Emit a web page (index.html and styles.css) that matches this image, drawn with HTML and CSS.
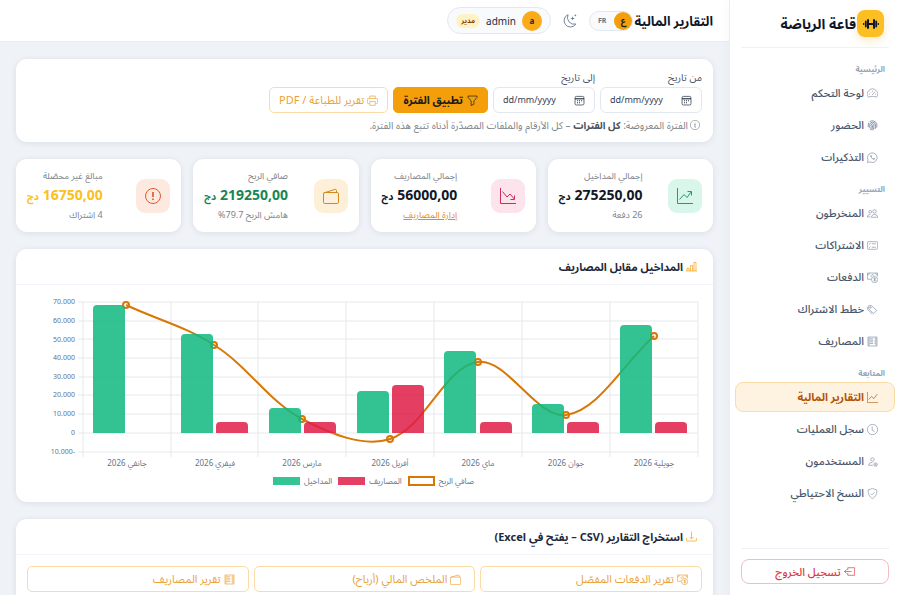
FILE: index.html
```html
<!DOCTYPE html>
<html lang="ar" dir="rtl">

<head>
    <meta charset="UTF-8">
    <meta name="viewport" content="width=device-width, initial-scale=1.0">
    <title>التقارير المالية</title>
    <link rel="stylesheet" href="styles.css">
</head>

<body>
    <!-- icon sprite -->
    <svg class="sprite" aria-hidden="true">
        <symbol id="i-dumbbell" viewBox="0 0 16 16"><path d="M5 8h6" stroke-width="2"/><path d="M2.800 5.500v5M13.200 5.500v5" stroke-width="1.800" stroke-linecap="round"/><path d="M5 4v8M11 4v8" stroke-width="2" stroke-linecap="round"/><path d="M.7 7v2M15.300 7v2" stroke-width="1.200"/></symbol>
        <symbol id="i-speed" viewBox="0 0 16 16"><path d="M2.200 13.500a7.400 7.400 0 1 1 11.600 0c-1-.8-2.600-1.300-5.800-1.300s-4.800.5-5.800 1.300zM8 4v1.500M3 9h1.500M11.500 9H13M4.500 5.500l1 1M7.500 10l4-4.500"/></symbol>
        <symbol id="i-finger" viewBox="0 0 16 16"><path d="M3 12c1-2 .5-3.500.7-5A4.400 4.400 0 0 1 12.400 7c.1 2 .1 3.500-.6 6M5 14.500C6.500 12 5.800 9 6 7.500a2.100 2.100 0 0 1 4.200 0c0 3-.3 5-1.500 7.500M8 7.500c.1 3-.2 5-1.200 7.300M1.700 10c.3-2-.1-4 .8-6M4 2.300A7 7 0 0 1 14 5c.5 2 .4 4 .2 6" stroke-width="1.400"/></symbol>
        <symbol id="i-whatsapp" viewBox="0 0 16 16"><path d="M.6 15.400l1-3.700A7 7 0 1 1 4.300 14.400z"/><path d="M5.600 4.200c-1 .8-1 2 0 3.500 1.300 2 2.500 3 4.200 3.500 1 .2 1.900-.5 1.900-1.600L9.900 8.700l-.9 1C8 9.300 7 8.300 6.400 7.200l.6-.9-.8-2z" class="fill"/></symbol>
        <symbol id="i-people" viewBox="0 0 16 16"><circle cx="11" cy="5" r="2.500"/><circle cx="4.700" cy="5.500" r="2"/><path d="M6.500 13.500c0-2.500 1.700-4 4.500-4s4.500 1.500 4.500 4zM.6 13H4.800M.6 13c0-2.200 1.300-3.500 4.100-3.500"/></symbol>
        <symbol id="i-card" viewBox="0 0 16 16"><rect x=".5" y="2.500" width="15" height="11" rx="1.300"/><path d="M7 5.500h6M7 10.500h6M2.700 5.500l.8.8L5 4.600M2.700 10.500l.8.8L5 9.600"/></symbol>
        <symbol id="i-cash" viewBox="0 0 16 16"><circle cx="11" cy="11" r="4.500"/><path d="M12.500 9.500c-1-.8-2.600-.6-2.600.3 0 1.200 2.600.7 2.600 2 0 1-1.700 1.200-2.700.2M11.200 8.300v5.400M6 10.500H.5v-9h15v5M.5 4.500a3 3 0 0 0 3-3M12.500 1.500a3 3 0 0 0 3 3M6.300 7.200A2 2 0 1 1 9.800 5.500"/></symbol>
        <symbol id="i-tags" viewBox="0 0 16 16"><path d="M2.500 2.500H7.100l7 7-4.600 4.600-7-7zM1 4v4l6.800 6.800"/><circle cx="5.200" cy="5.200" r="1"/></symbol>
        <symbol id="i-receipt" viewBox="0 0 16 16"><path d="M1.500 1.500h13v13h-13zM4 4h5M4 6.300h5M4 8.600h5M4 10.900h5M11 4h1.500M11 6.300h1.500M11 8.600h1.500M11 10.900h1.500M3 2v12M13 2v12"/></symbol>
        <symbol id="i-graph" viewBox="0 0 16 16"><path d="M.5 0v15.500H16M2.500 11l4-4.500 3.500 3 5-6.500"/></symbol>
        <symbol id="i-clock" viewBox="0 0 16 16"><circle cx="8" cy="8" r="7.500"/><path d="M7.500 3.500V9l3.500 2"/></symbol>
        <symbol id="i-persongear" viewBox="0 0 16 16"><circle cx="8" cy="5" r="2.500"/><path d="M8.500 13.500H2.500c0-2.700 2-4 5.500-4"/><circle cx="12.500" cy="12.500" r="2.500"/><circle cx="12.500" cy="12.500" r=".8"/></symbol>
        <symbol id="i-shield" viewBox="0 0 16 16"><path d="M8 .6c2 1 4 1.600 6.100 2C14.800 8 13 12.500 8 15.400 3 12.500 1.200 8 1.900 2.600 4 2.200 6 1.600 8 .6zM5.300 8l2 2 3.500-3.600"/></symbol>
        <symbol id="i-logout" viewBox="0 0 16 16"><path d="M5.500 6V2.500h10v11h-10V10M11 8H.8M3.800 5L.8 8l3 3"/></symbol>
        <symbol id="i-moon" viewBox="0 0 16 16"><path d="M5.800.8a7.300 7.300 0 1 0 8.900 10.700A7.700 7.700 0 0 1 5.800.8z"/><path d="M11 2.500l.6 1.900 1.900.6-1.900.6-.6 1.900-.6-1.900L8.500 5l1.900-.6zM14 0l.4 1.100 1.100.4-1.100.4L14 3l-.4-1.100-1.100-.4 1.100-.4z" class="fill"/></symbol>
        <symbol id="i-calendar" viewBox="0 0 16 16"><rect x="1.500" y="2" width="13" height="12.500" rx="2"/><path d="M1.500 5.500h13" stroke-width="1.600"/><path d="M4.500 8.500h1.400M7.300 8.500h1.400M10.100 8.500h1.400M4.500 11.300h1.400M7.300 11.300h1.400" stroke-width="1.500"/></symbol>
        <symbol id="i-funnel" viewBox="0 0 16 16"><path d="M1.500 1.500h13v2L10 8.700v4.800l-4 1.800V8.700L1.500 3.500z"/></symbol>
        <symbol id="i-printer" viewBox="0 0 16 16"><path d="M4 4.500V1.500h8v3M3.500 12.500H2a1.500 1.500 0 0 1-1.500-1.500V6.500A1.500 1.500 0 0 1 2 5h12a1.500 1.500 0 0 1 1.500 1.500V11a1.500 1.500 0 0 1-1.500 1.500h-1.500M4 9.500h8v5.500H4zM2.500 7.500h1"/></symbol>
        <symbol id="i-info" viewBox="0 0 16 16"><circle cx="8" cy="8" r="7.500"/><path d="M6.800 6.800h1.500l-.7 4.400c0 .6.600.7 1.400.4M8.400 4.200v1" stroke-width="1.300"/></symbol>
        <symbol id="i-up" viewBox="0 0 16 16"><path d="M.5 0v15.500H16M2.500 11.500L7 6.500l3 3L14 4M10.500 3.500h4v4"/></symbol>
        <symbol id="i-down" viewBox="0 0 16 16"><path d="M.5 0v15.500H16M2.500 3.500L7 9l3-3 4.300 5M10.500 11.500h4v-4"/></symbol>
        <symbol id="i-wallet" viewBox="0 0 16 16"><rect x=".5" y="4.500" width="15" height="11" rx="1.300"/><path d="M.7 5L12 1.400c.7-.2 1.500.2 1.500 1V4.500"/></symbol>
        <symbol id="i-alert" viewBox="0 0 16 16"><circle cx="8" cy="8" r="7.500"/><path d="M8 4v5" stroke-width="1.700"/><path d="M8 10.500v1.600" stroke-width="1.700"/></symbol>
        <symbol id="i-bars" viewBox="0 0 16 16"><path d="M1.500 14.500v-4h3v4M6.500 14.500v-8h3v8M11.500 14.500V2h3v12.500M0 14.500h16"/></symbol>
        <symbol id="i-download" viewBox="0 0 16 16"><path d="M.5 10v3.500a1 1 0 0 0 1 1h13a1 1 0 0 0 1-1V10M8 1v10.500M5 8.500l3 3 3-3"/></symbol>
    </svg>

    <div class="layout">
        <aside class="sidebar">
            <div class="brand">
                <span class="brand-logo"><svg class="icon"><use href="#i-dumbbell"/></svg></span>
                <span>قاعة الرياضة</span>
            </div>

            <nav class="menu">
                <h2 class="menu-title">الرئيسية</h2>
                <a href="#"><svg class="icon"><use href="#i-speed"/></svg>لوحة التحكم</a>
                <a href="#"><svg class="icon"><use href="#i-finger"/></svg>الحضور</a>
                <a href="#"><svg class="icon"><use href="#i-whatsapp"/></svg>التذكيرات</a>

                <h2 class="menu-title">التسيير</h2>
                <a href="#"><svg class="icon"><use href="#i-people"/></svg>المنخرطون</a>
                <a href="#"><svg class="icon"><use href="#i-card"/></svg>الاشتراكات</a>
                <a href="#"><svg class="icon"><use href="#i-cash"/></svg>الدفعات</a>
                <a href="#"><svg class="icon"><use href="#i-tags"/></svg>خطط الاشتراك</a>
                <a href="#"><svg class="icon"><use href="#i-receipt"/></svg>المصاريف</a>

                <h2 class="menu-title">المتابعة</h2>
                <a href="#" class="active"><svg class="icon"><use href="#i-graph"/></svg>التقارير المالية</a>
                <a href="#"><svg class="icon"><use href="#i-clock"/></svg>سجل العمليات</a>
                <a href="#"><svg class="icon"><use href="#i-persongear"/></svg>المستخدمون</a>
                <a href="#"><svg class="icon"><use href="#i-shield"/></svg>النسخ الاحتياطي</a>
            </nav>

            <div class="sidebar-footer">
                <button type="button" class="logout"><svg class="icon"><use href="#i-logout"/></svg>تسجيل الخروج</button>
            </div>
        </aside>

        <div class="page">
            <header class="topbar">
                <h1>التقارير المالية</h1>
                <div class="lang">
                    <a href="#" class="current">ع</a>
                    <a href="#">FR</a>
                </div>
                <button type="button" class="theme" aria-label="الوضع الليلي"><svg class="icon"><use href="#i-moon"/></svg></button>
                <div class="user">
                    <span class="avatar">a</span>
                    <span class="user-name">admin</span>
                    <span class="role">مدير</span>
                </div>
            </header>

            <main class="content">
                <section class="card filter">
                    <form class="filter-row">
                        <div class="field">
                            <label for="from">من تاريخ</label>
                            <div class="date">
                                <svg class="icon"><use href="#i-calendar"/></svg>
                                <input type="text" id="from" placeholder="dd/mm/yyyy" dir="ltr">
                            </div>
                        </div>
                        <div class="field">
                            <label for="to">إلى تاريخ</label>
                            <div class="date">
                                <svg class="icon"><use href="#i-calendar"/></svg>
                                <input type="text" id="to" placeholder="dd/mm/yyyy" dir="ltr">
                            </div>
                        </div>
                        <button type="button" class="btn btn-solid"><svg class="icon"><use href="#i-funnel"/></svg>تطبيق الفترة</button>
                        <a href="#" class="btn btn-outline"><svg class="icon"><use href="#i-printer"/></svg>تقرير للطباعة / PDF</a>
                    </form>
                    <p class="note"><svg class="icon"><use href="#i-info"/></svg><span>الفترة المعروضة: <strong>كل الفترات</strong> – كل الأرقام والملفات المصدّرة أدناه تتبع هذه الفترة.</span></p>
                </section>

                <section class="stats">
                    <div class="card stat">
                        <span class="stat-icon green"><svg class="icon"><use href="#i-up"/></svg></span>
                        <div class="stat-text">
                            <span>إجمالي المداخيل</span>
                            <strong>275250,00 <small>دج</small></strong>
                            <span>26 دفعة</span>
                        </div>
                    </div>
                    <div class="card stat">
                        <span class="stat-icon red"><svg class="icon"><use href="#i-down"/></svg></span>
                        <div class="stat-text">
                            <span>إجمالي المصاريف</span>
                            <strong>56000,00 <small>دج</small></strong>
                            <a href="#">إدارة المصاريف</a>
                        </div>
                    </div>
                    <div class="card stat">
                        <span class="stat-icon amber"><svg class="icon"><use href="#i-wallet"/></svg></span>
                        <div class="stat-text">
                            <span>صافي الربح</span>
                            <strong class="profit">219250,00 <small>دج</small></strong>
                            <span>هامش الربح 79.7%</span>
                        </div>
                    </div>
                    <div class="card stat">
                        <span class="stat-icon orange"><svg class="icon"><use href="#i-alert"/></svg></span>
                        <div class="stat-text">
                            <span>مبالغ غير محصّلة</span>
                            <strong class="due">16750,00 <small>دج</small></strong>
                            <span>4 اشتراك</span>
                        </div>
                    </div>
                </section>

                <section class="card">
                    <h2 class="card-title"><svg class="icon"><use href="#i-bars"/></svg>المداخيل مقابل المصاريف</h2>
                    <div class="card-body">
                        <svg class="chart" viewBox="0 0 675 174" role="img" aria-label="المداخيل مقابل المصاريف">
                            <path class="grid" d="M51 6H671M51 25H671M51 43H671M51 62H671M51 81H671M51 99H671M51 118H671M51 137H671M51 156H671M56 6V161M144 6V161M231 6V161M319 6V161M407 6V161M495 6V161M583 6V161M671 6V161"/>
                            <g class="labels-y">
                                <text x="48" y="8">70.000</text>
                                <text x="48" y="27">60.000</text>
                                <text x="48" y="46">50.000</text>
                                <text x="48" y="64">40.000</text>
                                <text x="48" y="83">30.000</text>
                                <text x="48" y="101">20.000</text>
                                <text x="48" y="120">10.000</text>
                                <text x="48" y="139">0</text>
                                <text x="48" y="158">10.000-</text>
                            </g>
                            <g class="labels-x">
                                <text x="100" y="170">جانفي 2026</text>
                                <text x="188" y="170">فيفري 2026</text>
                                <text x="275" y="170">مارس 2026</text>
                                <text x="363" y="170">أفريل 2026</text>
                                <text x="451" y="170">ماي 2026</text>
                                <text x="539" y="170">جوان 2026</text>
                                <text x="627" y="170">جويلية 2026</text>
                            </g>
                            <g class="line">
                                <path d="M99 9C131 24 160 31 187 49C221 70 241 105 275 123C302 137 336 152 363 143C398 132 418 70 451 66C480 62 510 123 539 119C572 114 596 68 627 40"/>
                                <circle cx="99" cy="9" r="3"/>
                                <circle cx="187" cy="49" r="3"/>
                                <circle cx="275" cy="123" r="3"/>
                                <circle cx="363" cy="143" r="3"/>
                                <circle cx="451" cy="66" r="3"/>
                                <circle cx="539" cy="119" r="3"/>
                                <circle cx="627" cy="40" r="3"/>
                            </g>
                            <g class="income">
                                <path d="M66 137V13q0-4 4-4h24q4 0 4 4V137z"/>
                                <path d="M154 137V42q0-4 4-4h24q4 0 4 4V137z"/>
                                <path d="M242 137V116q0-4 4-4h24q4 0 4 4V137z"/>
                                <path d="M330 137V99q0-4 4-4h24q4 0 4 4V137z"/>
                                <path d="M417 137V59q0-4 4-4h24q4 0 4 4V137z"/>
                                <path d="M505 137V112q0-4 4-4h24q4 0 4 4V137z"/>
                                <path d="M593 137V33q0-4 4-4h24q4 0 4 4V137z"/>
                            </g>
                            <g class="expense">
                                <path d="M189 137V130q0-4 4-4h24q4 0 4 4V137z"/>
                                <path d="M277 137V130q0-4 4-4h24q4 0 4 4V137z"/>
                                <path d="M365 137V93q0-4 4-4h24q4 0 4 4V137z"/>
                                <path d="M453 137V130q0-4 4-4h24q4 0 4 4V137z"/>
                                <path d="M540 137V130q0-4 4-4h24q4 0 4 4V137z"/>
                                <path d="M628 137V130q0-4 4-4h24q4 0 4 4V137z"/>
                            </g>
                        </svg>
                        <ul class="legend">
                            <li>صافي الربح<i class="key key-profit"></i></li>
                            <li>المصاريف<i class="key key-expense"></i></li>
                            <li>المداخيل<i class="key key-income"></i></li>
                        </ul>
                    </div>
                </section>

                <section class="card">
                    <h2 class="card-title"><svg class="icon"><use href="#i-download"/></svg>استخراج التقارير (CSV – يفتح في Excel)</h2>
                    <div class="card-body exports">
                        <a href="#" class="btn btn-outline"><svg class="icon"><use href="#i-cash"/></svg>تقرير الدفعات المفصّل</a>
                        <a href="#" class="btn btn-outline"><svg class="icon"><use href="#i-wallet"/></svg>الملخص المالي (أرباح)</a>
                        <a href="#" class="btn btn-outline"><svg class="icon"><use href="#i-receipt"/></svg>تقرير المصاريف</a>
                    </div>
                </section>
            </main>
        </div>
    </div>
</body>

</html>
```
FILE: styles.css
```css
* {
    box-sizing: border-box;
}

body {
    margin: 0;
    font-family: "Noto Sans", "Noto Sans Arabic", "DejaVu Sans", sans-serif;
    font-size: 11px;
    line-height: 16px;
    color: #1e293b;
    background-color: #eff3f8;
}

h1, h2, p, ul {
    margin: 0;
    padding: 0;
}

a {
    color: inherit;
    text-decoration: none;
}

button, input {
    font: inherit;
    color: inherit;
}

.sprite {
    display: none;
}

.icon {
    flex: none;
    width: 11px;
    height: 11px;
    fill: none;
    stroke: currentColor;
    stroke-width: 1;
}

.fill {
    fill: currentColor;
    stroke: none;
}

.layout {
    display: flex;
    min-height: 100vh;
}

/* sidebar */
.sidebar {
    position: sticky;
    top: 0;
    flex: none;
    display: flex;
    flex-direction: column;
    width: 171px;
    height: 100vh;
    background-color: #fff;
    border-left: 1px solid #e9eef4;
    box-shadow: 0 0 12px rgba(15, 23, 42, 0.04);
}

.brand {
    display: flex;
    align-items: center;
    gap: 1px;
    margin: 0 11px;
    padding: 10px 5px;
    border-bottom: 1px solid #eef2f7;
    font-size: 14px;
    font-weight: bold;
    color: #0f172a;
}

.brand-logo {
    display: grid;
    place-items: center;
    width: 27px;
    height: 27px;
    border-radius: 8px;
    background-color: #fbbf24;
    box-shadow: 0 3px 8px rgba(245, 158, 11, 0.25);
}

.brand-logo .icon {
    width: 16px;
    height: 16px;
}

.menu {
    display: flex;
    flex-direction: column;
    gap: 2px;
    padding: 0 5px;
}

.menu-title {
    padding: 14px 10px 0;
    font-size: 8px;
    line-height: 14px;
    font-weight: bold;
    color: #94a3b8;
}

.menu-title:not(:first-child) {
    padding-top: 7px;
    line-height: 15px;
}

.menu a {
    display: flex;
    align-items: center;
    gap: 3px;
    height: 30px;
    padding: 0 16px;
    border: 1px solid transparent;
    border-radius: 8px;
    font-weight: 500;
    color: #475569;
}

.menu .icon {
    color: #8492a8;
}

.menu .active {
    background-color: #fef3e0;
    border-color: #fbdca6;
    font-weight: bold;
    color: #b45309;
}

.menu .active .icon {
    color: #b45309;
}

.sidebar-footer {
    margin: auto 11px 0;
    padding: 10px 0 11px;
    border-top: 1px solid #eef2f7;
}

.logout {
    display: flex;
    align-items: center;
    justify-content: center;
    gap: 3px;
    width: 100%;
    height: 25px;
    border: 1px solid #f5bcc2;
    border-radius: 8px;
    background: none;
    font-weight: 500;
    color: #dc3545;
}

/* top bar */
.page {
    flex: 1;
    min-width: 0;
}

.topbar {
    display: flex;
    align-items: center;
    height: 42px;
    padding: 0 16px;
    background-color: #fff;
    border-bottom: 1px solid #e9eef4;
}

.topbar h1 {
    font-size: 13px;
    color: #0f172a;
}

.lang {
    display: flex;
    align-items: center;
    margin-right: 1px;
    border: 1px solid #e2e8f0;
    border-radius: 10px;
    background-color: #f8fafc;
    font-size: 7px;
    font-weight: bold;
    color: #64748b;
}

.lang a {
    padding: 0 8px;
    line-height: 18px;
}

.lang .current {
    width: 18px;
    padding: 0;
    border-radius: 9px;
    background-color: #f59e0b;
    font-size: 9px;
    text-align: center;
    color: #1a1a1a;
}

.theme {
    display: grid;
    margin: 0 12px;
    padding: 0;
    border: 0;
    background: none;
    color: #64748b;
}

.theme .icon {
    width: 14px;
    height: 14px;
}

.user {
    display: flex;
    align-items: center;
    gap: 6px;
    height: 27px;
    padding: 0 8px;
    border: 1px solid #e2e8f0;
    border-radius: 14px;
    background-color: #f8fafc;
    font-size: 10px;
}

.avatar {
    width: 20px;
    border-radius: 50%;
    background-color: #f9ab1a;
    font-size: 8px;
    line-height: 20px;
    font-weight: bold;
    text-align: center;
}

.role {
    padding: 0 5px;
    border-radius: 8px;
    background-color: #fef3c7;
    font-size: 7px;
    line-height: 14px;
    font-weight: bold;
    color: #92400e;
}

/* content */
.content {
    display: flex;
    flex-direction: column;
    gap: 17px;
    padding: 17px 16px;
}

.card {
    border-radius: 11px;
    background-color: #fff;
    box-shadow: 0 1px 6px rgba(15, 23, 42, 0.09);
}

.card-title {
    display: flex;
    align-items: center;
    gap: 3px;
    height: 36px;
    padding: 0 16px;
    border-bottom: 1px solid #f1f4f8;
    font-size: 11px;
}

.card-title .icon {
    color: #f59e0b;
}

.card-body {
    padding: 11px;
}

.filter {
    padding: 11px 11px 9px;
}

.filter-row {
    display: flex;
    align-items: flex-end;
    gap: 5px;
}

.field {
    width: 102px;
}

.field label {
    display: block;
    margin-bottom: 2px;
    font-size: 10px;
    line-height: 15px;
    color: #475569;
}

.date {
    display: flex;
    align-items: center;
    height: 26px;
    padding: 0 9px;
    border: 1px solid #e2e8f0;
    border-radius: 6px;
}

.date input {
    width: 100%;
    min-width: 0;
    padding: 0;
    border: 0;
    outline: 0;
    background: none;
    font-size: 9px;
}

.date input::placeholder {
    color: #334155;
    opacity: 1;
}

.btn {
    display: flex;
    align-items: center;
    gap: 3px;
    height: 26px;
    padding: 0 9px;
    border: 1px solid #fcdba6;
    border-radius: 5px;
    background: none;
    color: #e9a23b;
    white-space: nowrap;
}

.btn-solid {
    gap: 4px;
    border-color: #f59e0b;
    background-color: #f59e0b;
    font-weight: bold;
    color: #1a1a1a;
}

.note {
    display: flex;
    align-items: center;
    gap: 2px;
    padding: 4px 2px 0;
    font-size: 10px;
    color: #7c838b;
}

.note strong {
    color: #4b5259;
}

.note .icon {
    width: 10px;
    height: 10px;
}

/* stat cards */
.stats {
    display: grid;
    grid-template-columns: repeat(4, 1fr);
    gap: 12px;
}

.stat {
    display: flex;
    align-items: center;
    justify-content: space-between;
    height: 73px;
    padding: 0 11px;
}

.stat-icon {
    display: grid;
    place-items: center;
    width: 34px;
    height: 34px;
    border-radius: 9px;
}

.stat-icon .icon {
    width: 16px;
    height: 16px;
}

.green {
    background-color: #d9f6eb;
    color: #1f9d74;
}

.red {
    background-color: #fde4ec;
    color: #d42a5b;
}

.amber {
    background-color: #fef0d8;
    color: #d08a1d;
}

.orange {
    background-color: #fee9e0;
    color: #e05a2b;
}

.stat-text {
    display: flex;
    flex-direction: column;
    font-size: 9px;
    color: #7c838b;
}

.stat-text strong {
    font-size: 14px;
    line-height: 21px;
    color: #111827;
    white-space: nowrap;
}

.stat-text small {
    font-size: 10px;
}

.stat-text .profit {
    color: #198754;
}

.stat-text .due {
    color: #fbbf24;
}

.stat-text a {
    color: #e08a2b;
    text-decoration: underline;
}

/* chart */
.chart {
    display: block;
    width: 100%;
    font-size: 7px;
}

.chart text {
    fill: #64748b;
}

.grid {
    fill: none;
    stroke: #e6e8ec;
}

.labels-y {
    direction: ltr;
    text-anchor: end;
}

.labels-x {
    font-size: 8px;
    text-anchor: middle;
}

.line {
    fill: none;
    stroke: #d97706;
    stroke-width: 2;
}

.income {
    fill: #10b981;
    opacity: 0.85;
}

.expense {
    fill: #e11d48;
    opacity: 0.85;
}

.legend {
    display: flex;
    justify-content: center;
    gap: 6px;
    padding: 4px 0 3px 18px;
    list-style: none;
    font-size: 8px;
    line-height: 14px;
    color: #64748b;
}

.legend li {
    display: flex;
    align-items: center;
    gap: 4px;
}

.key {
    width: 27px;
    height: 8px;
}

.key-profit {
    height: 10px;
    border: 2px solid #d97706;
}

.key-expense {
    background-color: #e54064;
}

.key-income {
    background-color: #34c495;
}

.exports {
    display: grid;
    grid-template-columns: repeat(3, 1fr);
    gap: 5px;
}

.exports .btn {
    padding: 0 13px;
}
```
